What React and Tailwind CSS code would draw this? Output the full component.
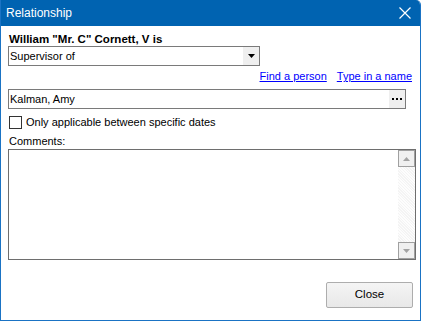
import React from 'react'

function ArrowDown({ color = '#000' }) {
  return (
    <svg width="7" height="4" viewBox="0 0 7 4">
      <path d="M0 0h7L3.5 4z" fill={color} />
    </svg>
  )
}

function ArrowUp({ color = '#000' }) {
  return (
    <svg width="7" height="4" viewBox="0 0 7 4">
      <path d="M0 4h7L3.5 0z" fill={color} />
    </svg>
  )
}

export default function App() {
  return (
    <div className="w-[422px] h-[321px] bg-white font-['Liberation_Sans',Arial,sans-serif] text-[11px] text-black">
      <div className="w-[421px] h-[321px] flex flex-col border-l border-r border-b border-[#1a73c4] rounded-tr-[5px] overflow-hidden">
        {/* Title bar */}
        <div className="h-[26px] shrink-0 bg-[#0063b1] flex items-center justify-between pl-[5px] pr-[9px]">
          <span className="text-white text-[12px] leading-none">Relationship</span>
          <svg width="12" height="12" viewBox="0 0 12 12">
            <path d="M0.5 0.5l11 11M11.5 0.5l-11 11" stroke="#fff" strokeWidth="1.2" />
          </svg>
        </div>

        <div className="flex flex-col pl-[7px]">
          <div className="mt-[6px] h-[14px] leading-[14px] font-bold text-[11.5px] pl-[1px]">
            William "Mr. C" Cornett, V is
          </div>

          {/* Relationship type */}
          <div className="w-[252px] h-[20px] border border-[#7a7a7a] flex items-stretch">
            <div className="flex-1 leading-[18px] pl-[1px]">Supervisor of</div>
            <div className="w-[16px] bg-[#efefef] flex items-center justify-center">
              <ArrowDown />
            </div>
          </div>

          <div className="h-[23px] pt-[3px] leading-[15px] flex justify-end gap-[10px] pr-[8px] w-[412px]">
            <span className="text-[#0000ff] underline">Find a person</span>
            <span className="text-[#0000ff] underline">Type in a name</span>
          </div>

          {/* Person */}
          <div className="w-[398px] h-[20px] border border-[#7a7a7a] flex items-stretch">
            <div className="flex-1 leading-[18px] pl-[1px]">Kalman, Amy</div>
            <div className="w-[16px] bg-[#efefef] flex items-center justify-center gap-[2px]">
              <span className="w-[2px] h-[2px] bg-black" />
              <span className="w-[2px] h-[2px] bg-black" />
              <span className="w-[2px] h-[2px] bg-black" />
            </div>
          </div>

          <div className="mt-[7px] h-[13px] flex items-center pl-[1px]">
            <span className="w-[13px] h-[13px] border border-[#333] bg-white" />
            <span className="ml-[4px] leading-[13px]">Only applicable between specific dates</span>
          </div>

          <div className="mt-[5px] h-[15px] leading-[15px] pl-[1px]">Comments:</div>

          {/* Comments */}
          <div className="w-[408px] h-[111px] border border-[#6e6e6e] flex justify-end">
            <div className="w-[17px] flex flex-col bg-[repeating-linear-gradient(45deg,#f4f4f4_0px,#f4f4f4_1px,#fdfdfd_1px,#fdfdfd_2px)]">
              <div className="h-[17px] border border-[#a0a0a0] bg-[#f0f0f0] flex items-center justify-center">
                <ArrowUp color="#a3a3a3" />
              </div>
              <div className="flex-1" />
              <div className="h-[17px] border border-[#a0a0a0] bg-[#f0f0f0] flex items-center justify-center">
                <ArrowDown color="#a3a3a3" />
              </div>
            </div>
          </div>

          <button className="mt-[22px] ml-[318px] w-[87px] h-[26px] rounded-[2px] border border-[#adadad] bg-gradient-to-b from-[#f4f4f4] to-[#e8e8e8] text-[11.5px]">
            Close
          </button>
        </div>
      </div>
    </div>
  )
}
